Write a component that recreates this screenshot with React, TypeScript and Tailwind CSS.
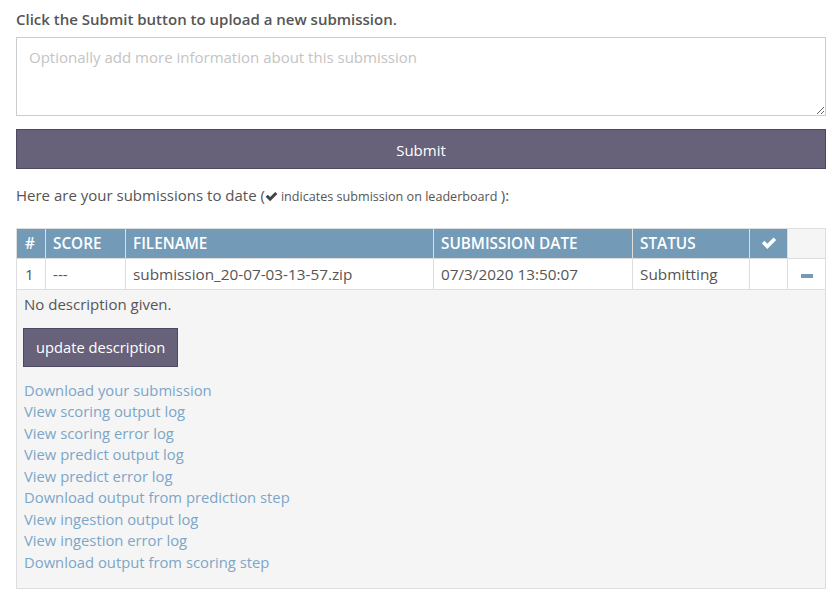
export default function App() {
  const links = [
    "Download your submission",
    "View scoring output log",
    "View scoring error log",
    "View predict output log",
    "View predict error log",
    "Download output from prediction step",
    "View ingestion output log",
    "View ingestion error log",
    "Download output from scoring step",
  ];
  return (
    <div className="w-[832px] h-[594px] bg-white pl-4 pr-[6px] pt-[9px] text-[#555] font-['Open_Sans',sans-serif] text-[15px] leading-[21.4px]">
      <p className="text-[15px] font-semibold leading-[20px] mb-2">
        Click the Submit button to upload a new submission.
      </p>
      <textarea
        className="block w-full h-[79px] border border-[#ccc] px-3 pt-[9px] text-[15px] placeholder:text-[#c4c4c4] outline-none"
        placeholder="Optionally add more information about this submission"
      />
      <button className="mt-[13px] w-full h-[40px] pt-[3px] bg-[#67617a] border border-[#4d4862] text-white text-[15px]">
        Submit
      </button>
      <p className="mt-[16px]">
        Here are your submissions to date (
        <span className="text-[12.6px]">
          <svg viewBox="0 0 16 16" className="inline w-[13px] h-[13px] -mt-[3px] mr-[3px]" fill="#444">
            <path d="M0.8 8.4 L3.4 5.8 L6.3 8.7 L12.6 2.4 L15.2 5 L6.3 13.9 Z" />
          </svg>
          indicates submission on leaderboard{" "}
        </span>
        ):
      </p>
      <table className="mt-[21px] w-full border-collapse text-left">
        <thead>
          <tr className="text-[15.3px] text-white h-[30px]">
            <th className="w-[29px] bg-[#739bb8] border border-[#ddd] px-[8px] font-semibold">#</th>
            <th className="w-[80px] bg-[#739bb8] border border-[#ddd] px-[7px] font-semibold">SCORE</th>
            <th className="w-[308px] bg-[#739bb8] border border-[#ddd] px-[7px] font-semibold">FILENAME</th>
            <th className="w-[199px] bg-[#739bb8] border border-[#ddd] px-[7px] font-semibold">SUBMISSION DATE</th>
            <th className="w-[117px] bg-[#739bb8] border border-[#ddd] px-[7px] font-semibold">STATUS</th>
            <th className="w-[38px] bg-[#739bb8] border border-[#ddd] text-center font-semibold">
              <svg viewBox="0 0 16 16" className="inline w-[16px] h-[16px] -mt-1" fill="white">
                <path d="M0.8 8.4 L3.4 5.8 L6.3 8.7 L12.6 2.4 L15.2 5 L6.3 13.9 Z" />
              </svg>
            </th>
            <th className="bg-[#f5f5f5] border border-[#ddd]"></th>
          </tr>
        </thead>
        <tbody>
          <tr className="h-[31px] text-[15.3px]">
            <td className="border border-[#ddd] px-[8px]">1</td>
            <td className="border border-[#ddd] px-[7px]">---</td>
            <td className="border border-[#ddd] px-[7px]">submission_20-07-03-13-57.zip</td>
            <td className="border border-[#ddd] px-[7px]">07/3/2020 13:50:07</td>
            <td className="border border-[#ddd] px-[7px]">Submitting</td>
            <td className="border border-[#ddd]"></td>
            <td className="border border-[#ddd] text-center">
              <span className="inline-block w-[12px] h-[4px] bg-[#739bb8] align-middle"></span>
            </td>
          </tr>
          <tr>
            <td colSpan={7} className="h-[299px] align-top bg-[#f5f5f5] border border-[#ddd] px-[7px] pt-[4px]">
              <p>No description given.</p>
              <button className="mt-[12px] -ml-px h-[39px] px-[12px] bg-[#67617a] border border-[#4d4862] text-white text-[14.7px]">
                update description
              </button>
              <div className="mt-[13px] flex flex-col text-[14.8px]">
                {links.map((l) => (
                  <a key={l} className="text-[#7ca6c8] leading-[21.5px] w-fit">
                    {l}
                  </a>
                ))}
              </div>
            </td>
          </tr>
        </tbody>
      </table>
    </div>
  );
}
